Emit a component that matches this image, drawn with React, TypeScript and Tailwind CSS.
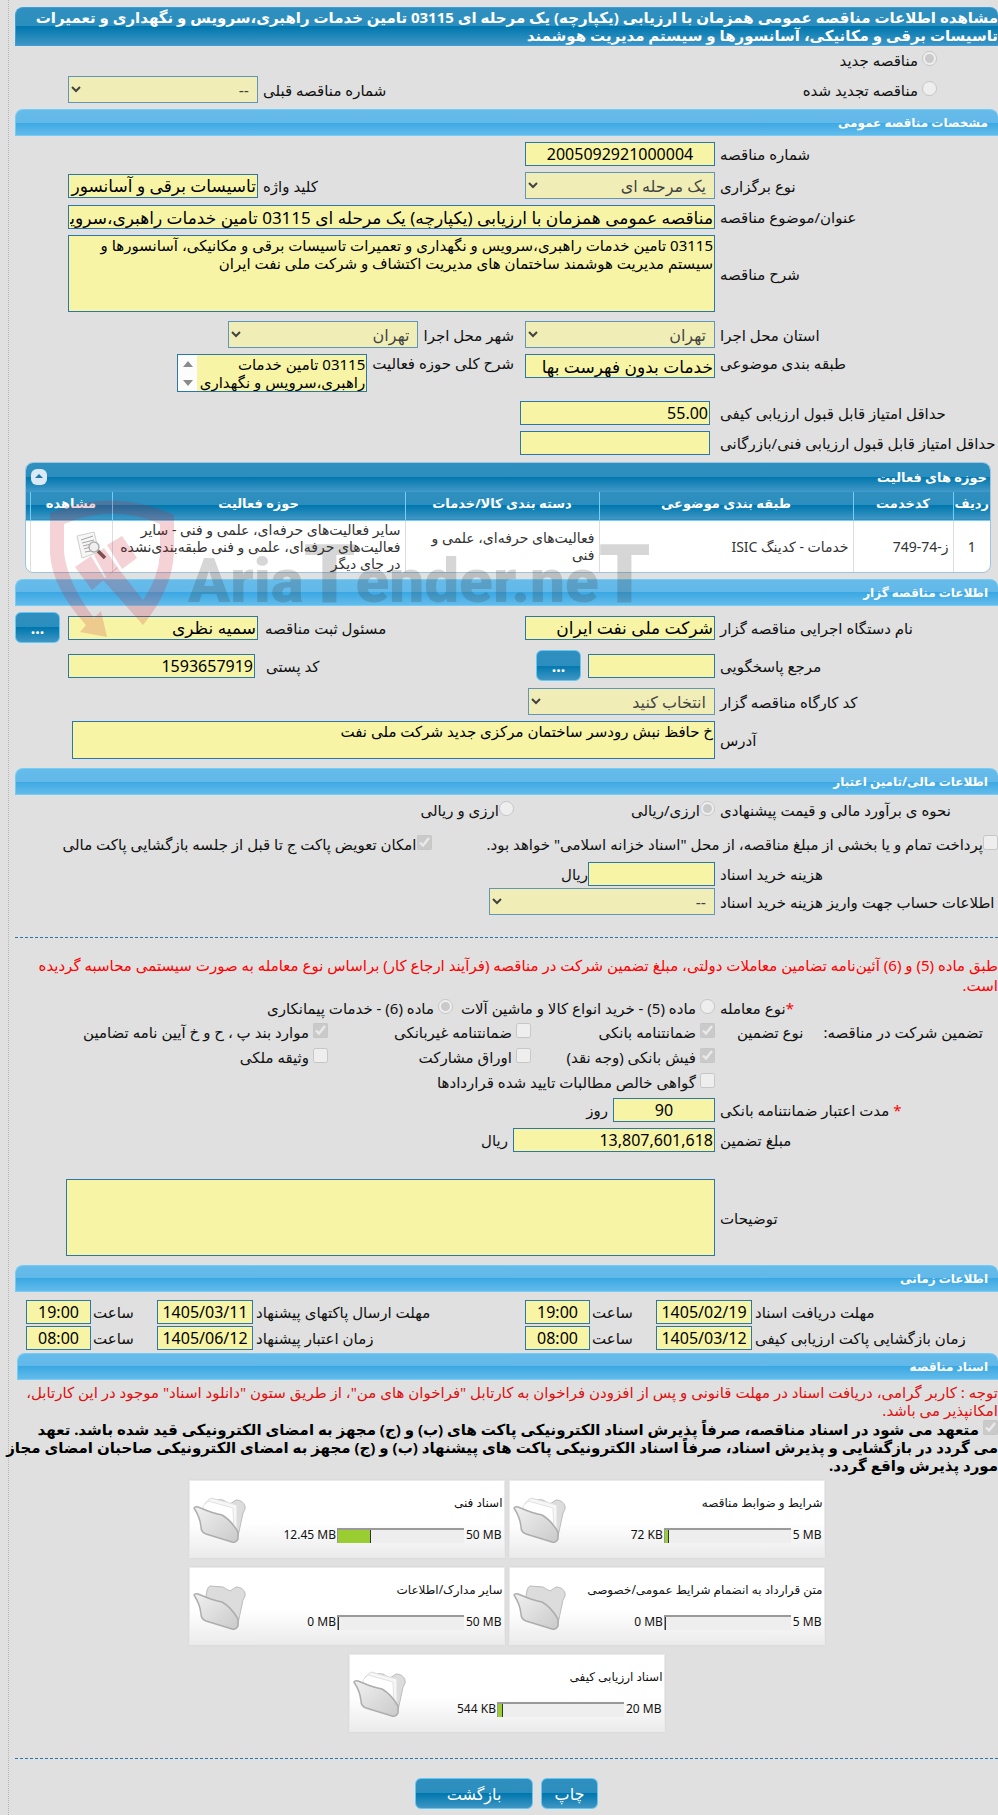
import { ReactNode } from 'react'
import clsx from 'clsx'

const darkBg = 'bg-[linear-gradient(#2f90bf_0%,#2c8ebe_50%,#0077ae_50%,#3f96c4_100%)]'
const lightBg = 'bg-[linear-gradient(#65bbea_0%,#62b9e9_50%,#3ba8e3_50%,#63bbea_100%)]'
const borderCls = 'border border-[#2a77a8]'
const fillCls = 'bg-[#f7f5a5] px-px text-black outline-none'

const SectionBar = ({ children, className }: { children: ReactNode; className?: string }) => (
  <h2
    className={clsx(
      'flex h-[27px] items-center rounded-t-lg border border-r-0 border-[#74cdf6] pr-[10px] text-[12px] font-bold text-white',
      lightBg,
      className
    )}
  >
    {children}
  </h2>
)

// 表单行: 右侧标签列 + 左侧字段区
const Row = ({
  label,
  htmlFor,
  children,
  className,
}: {
  label: ReactNode
  htmlFor?: string
  children: ReactNode
  className?: string
}) => (
  <div className={clsx('flex items-center', className)}>
    <label htmlFor={htmlFor} className="w-[278px] shrink-0 whitespace-nowrap text-left">
      {label}
    </label>
    <div className="flex flex-1 items-center pr-[5px]">{children}</div>
  </div>
)

const TextBox = ({
  id,
  value = '',
  large = false,
  className,
}: {
  id: string
  value?: string
  large?: boolean
  className?: string
}) => (
  <input
    id={id}
    type="text"
    readOnly
    value={value}
    className={clsx('h-6', large ? 'text-[17px]' : 'text-[16px]', borderCls, fillCls, className)}
  />
)

const Area = ({ id, value = '', className }: { id: string; value?: string; className?: string }) => (
  <textarea
    id={id}
    readOnly
    value={value}
    className={clsx('block resize-none text-[15px] leading-[18px]', borderCls, fillCls, className)}
  />
)

const Drop = ({ id, value, className }: { id: string; value: string; className?: string }) => (
  <select
    id={id}
    disabled
    className={clsx('h-[27px] bg-[#f7f5a5] px-1 text-[16px] text-black opacity-70', borderCls, className)}
  >
    <option>{value}</option>
  </select>
)

const Tick = ({
  type = 'checkbox',
  name,
  checked = false,
  tight = false,
  children,
  className,
}: {
  type?: 'checkbox' | 'radio'
  name?: string
  checked?: boolean
  tight?: boolean
  children: ReactNode
  className?: string
}) => (
  <label className={clsx('flex shrink-0 items-start whitespace-nowrap', !tight && 'gap-1', className)}>
    <input type={type} name={name} disabled defaultChecked={checked} className="size-[15px] shrink-0" />
    {children}
  </label>
)

const BlueButton = ({ children, className }: { children: ReactNode; className?: string }) => (
  <button
    type="button"
    className={clsx('h-[31px] rounded-md border border-[#63c8f4] text-[16px] text-white', darkBg, className)}
  >
    {children}
  </button>
)

const Folder = ({ filled }: { filled: boolean }) => (
  <svg viewBox="0 0 55 46" className="h-[46px] w-[55px] shrink-0" aria-hidden="true">
    <defs>
      <linearGradient id="folderFront" x1="0" y1="0" x2="1" y2="1">
        <stop offset="0" stopColor="#f1f1f1" />
        <stop offset="1" stopColor="#cacaca" />
      </linearGradient>
    </defs>
    <path
      d="M13 12 Q14 3 17 2 L30 3 Q33 5 37 7 L43 3 Q50 3 52 9 Q53 12 50 16 L44 44 L14 32 Z"
      fill="#dcdcdc"
      stroke="#bcbcbc"
    />
    {filled && <path d="M12 6 L18 1 L44 8 L44 36 L12 28 Z" fill="#f6f6f6" stroke="#dddddd" />}
    {filled && <path d="M10 9 L15 4 L40 11 L41 36 L12 28 Z" fill="#ffffff" stroke="#e2e2e2" />}
    <path
      d="M1 11 Q2 9 5 10 L15 14 Q20 16 29 18 Q38 23 45 35 L45 42 Q43 46 39 45 L13 37 Q8 35 8 30 Q7 20 1 11 Z"
      fill="url(#folderFront)"
      stroke="#adadad"
      strokeWidth="1.5"
    />
  </svg>
)

const docs = [
  { title: 'شرایط و ضوابط مناقصه', used: '72 KB', max: '5 MB', pct: 3 },
  { title: 'اسناد فنی', used: '12.45 MB', max: '50 MB', pct: 26 },
  { title: 'متن قرارداد به انضمام شرایط عمومی/خصوصی', used: '0 MB', max: '5 MB', pct: 0 },
  { title: 'سایر مدارک/اطلاعات', used: '0 MB', max: '50 MB', pct: 0 },
  { title: 'اسناد ارزیابی کیفی', used: '544 KB', max: '20 MB', pct: 4 },
]

const DocCard = ({ title, used, max, pct }: (typeof docs)[number]) => (
  <div
    dir="ltr"
    className="flex h-[78px] w-[316px] border border-[#eaeaea] bg-[linear-gradient(#ffffff_0%,#ffffff_55%,#ebebeb_100%)] pl-[3px] pr-px text-[12px] shadow-[0_0_2px_#d4d4d4]"
  >
    <div className="mt-4">
      <Folder filled={pct > 0} />
    </div>
    <div className="flex-1">
      <p dir="rtl" className="mt-3 h-5 whitespace-nowrap text-[12px] leading-5">
        {title}
      </p>
      <div className="mt-3 flex h-5 items-center justify-end gap-px">
        <span>{used}</span>
        <div className="flex h-[15px] w-[127px] border-l border-t-2 border-[#999999] bg-[#eeeeee]">
          <div
            className={clsx('border-r border-[#333333]', pct > 0 && 'bg-[#9acd32]')}
            style={{ width: `${pct}%` }}
          />
        </div>
        <span className="pl-px pr-px">{max}</span>
      </div>
    </div>
  </div>
)

const DocIcon = () => (
  <svg viewBox="0 0 32 30" className="h-[30px] w-8" aria-hidden="true">
    <path d="M1 5 L18 1 L23 21 L6 27 Z" fill="#f6f6f6" stroke="#cfcfcf" />
    <path d="M5 9 L17 5 M6 12 L18 9 M7 15 L15 13 M8 18 L14 16 M9 21 L15 20" stroke="#a5a5a5" />
    <circle cx="18" cy="16" r="5" fill="#efefef" stroke="#b0b0b0" strokeWidth="1.5" />
    <path d="M22 20 L29 27" stroke="#6c5a5a" strokeWidth="3.5" />
  </svg>
)

const Watermark = () => (
  <svg
    viewBox="45 495 610 150"
    className="pointer-events-none absolute left-[30px] top-[33px] h-[150px] w-[610px] overflow-visible"
    aria-hidden="true"
  >
    <g fill="#c8202c" fillOpacity="0.2">
      <path d="M50 513 Q113 487 174 515 V553 Q172 590 143 625 L103 580 L117 567 L143 600 Q159 577 160 553 V524 Q113 503 64 524 V553 Q68 584 94 618 L101 611 L107 637 L80 632 L86 625 Q52 588 50 553 Z" />
      <path d="M75 567 L91 556 L105 579 L92 590 Z" />
      <path d="M107 545 L122 536 L137 558 L122 569 Z" />
      <path d="M94 555 L104 548 L118 568 L106 577 Z" />
    </g>
    <text
      x="188"
      y="602"
      fontSize="62"
      fill="#333333"
      fillOpacity="0.2"
      fontFamily="Roboto"
      fontWeight="900"
      direction="ltr"
    >
      Aria<tspan fontSize="82">T</tspan>ender.ne<tspan fontSize="82">T</tspan>
    </text>
  </svg>
)

const th = 'border-l border-[#74cdf6] pb-1 font-bold'
const td = 'border-l border-[#dddddd] px-1'

const TimeField = ({ id, value }: { id: string; value: string }) => (
  <TextBox id={id} value={value} className="w-[65px] shrink-0 text-center" />
)

const DateField = ({ id, value }: { id: string; value: string }) => (
  <TextBox id={id} value={value} className="w-24 shrink-0 text-center" />
)

const timeRows = [
  {
    id: 'receive',
    cells: [
      { label: 'مهلت دریافت اسناد', date: '1405/02/19', time: '19:00' },
      { label: 'مهلت ارسال پاکتهای پیشنهاد', date: '1405/03/11', time: '19:00' },
    ],
  },
  {
    id: 'open',
    cells: [
      { label: 'زمان بازگشایی پاکت ارزیابی کیفی', date: '1405/03/12', time: '08:00' },
      { label: 'زمان اعتبار پیشنهاد', date: '1405/06/12', time: '08:00' },
    ],
  },
]

export default function App() {
  return (
    <div
      dir="rtl"
      className="overflow-hidden bg-[#e0e0e0] font-['Noto_Sans','DejaVu_Sans',sans-serif] text-[15px] leading-[18px] text-[#111111]"
    >
      <form className="ml-2 border-l border-dotted border-[#b5b5b5] pb-[6px] pl-[6px] pt-[7px]">
        <h1
          className={clsx(
            'h-[39px] whitespace-nowrap rounded-t-lg border border-r-0 border-[#3a9fdc] text-[15px] font-bold leading-[18px] text-white',
            darkBg
          )}
        >
          مشاهده اطلاعات مناقصه عمومی همزمان با ارزیابی (یکپارچه) یک مرحله ای 03115 تامین خدمات راهبری،سرویس و نگهداری و تعمیرات
          <br />
          تاسیسات برقی و مکانیکی، آسانسورها و سیستم مدیریت هوشمند
        </h1>

        <div className="flex h-7 items-center pr-[61px]">
          <Tick type="radio" name="kind" checked>
            مناقصه جدید
          </Tick>
        </div>
        <div className="mt-0.5 flex h-[27px] items-center justify-between pl-[53px] pr-[61px]">
          <Tick type="radio" name="kind">
            مناقصه تجدید شده
          </Tick>
          <div className="flex items-center gap-[5px]">
            <label htmlFor="prevNo">شماره مناقصه قبلی</label>
            <Drop id="prevNo" value="--" className="w-[190px]" />
          </div>
        </div>

        <SectionBar className="mt-1.5">مشخصات مناقصه عمومی</SectionBar>
        <Row label="شماره مناقصه" htmlFor="tenderNo" className="mt-1.5">
          <TextBox id="tenderNo" value="2005092921000004" className="w-[190px] text-center" />
        </Row>
        <Row label="نوع برگزاری" htmlFor="holdType" className="mt-1.5">
          <Drop id="holdType" value="یک مرحله ای" className="w-[190px]" />
          <div className="flex flex-1 items-center justify-end gap-[5px] pl-[53px]">
            <label htmlFor="keyword">کلید واژه</label>
            <TextBox id="keyword" value="تاسیسات برقی و آسانسور" large className="w-[190px]" />
          </div>
        </Row>
        <Row label="عنوان/موضوع مناقصه" htmlFor="subject" className="mt-1.5 pl-[53px]">
          <TextBox
            id="subject"
            value="مناقصه عمومی همزمان با ارزیابی (یکپارچه) یک مرحله ای 03115 تامین خدمات راهبری،سرویس و نگهداری و تعمیرات تاسیسات برقی"
            large
            className="w-full"
          />
        </Row>
        <Row label="شرح مناقصه" htmlFor="desc" className="mt-1.5 pl-[53px]">
          <Area
            id="desc"
            value="03115 تامین خدمات راهبری،سرویس و نگهداری و تعمیرات تاسیسات برقی و مکانیکی، آسانسورها و سیستم مدیریت هوشمند ساختمان های مدیریت اکتشاف و شرکت ملی نفت ایران"
            className="h-[77px] w-full"
          />
        </Row>
        <Row label="استان محل اجرا" htmlFor="province" className="mt-[9px]">
          <Drop id="province" value="تهران" className="w-[190px]" />
          <label htmlFor="city" className="pl-[5px] pr-[11px]">
            شهر محل اجرا
          </label>
          <Drop id="city" value="تهران" className="w-[190px]" />
        </Row>
        <div className="mt-1.5 flex h-[38px] items-start">
          <label htmlFor="category" className="w-[278px] shrink-0 text-left">
            طبقه بندی موضوعی
          </label>
          <div className="flex flex-1 items-start pr-[5px]">
            <TextBox id="category" value="خدمات بدون فهرست بها" large className="w-[190px]" />
            <label htmlFor="activity" className="pl-[5px] pr-[11px]">
              شرح کلی حوزه فعالیت
            </label>
            <div className={clsx('flex h-[38px] w-[190px] overflow-hidden', borderCls)}>
              <textarea
                id="activity"
                readOnly
                value="03115 تامین خدمات راهبری،سرویس و نگهداری و تعمیرات تاسیسات برقی"
                className={clsx('block min-w-0 flex-1 resize-none overflow-hidden leading-[18px]', fillCls)}
              />
              {/* 滚动条 */}
              <svg viewBox="0 0 19 36" className="h-9 w-[19px] shrink-0 bg-[#fcfcfc]" aria-hidden="true">
                <path d="M5 12 L10 6 L15 12 Z M5 25 L10 31 L15 25 Z" fill="#8b8b8b" />
              </svg>
            </div>
          </div>
        </div>
        <Row label="حداقل امتیاز قابل قبول ارزیابی کیفی" htmlFor="minQ" className="mt-[9px]">
          <TextBox id="minQ" value="55.00" className="mr-[5px] w-[190px]" />
        </Row>
        <Row label="حداقل امتیاز قابل قبول ارزیابی فنی/بازرگانی" htmlFor="minT" className="mt-1.5">
          <TextBox id="minT" className="mr-[5px] w-[190px]" />
        </Row>

        {/* حوزه های فعالیت */}
        <div className="relative mt-[7px] pl-[10px] pr-[7px]">
          <div className="h-[111px] overflow-hidden rounded-lg border border-[#9cc5e4] bg-white">
            <div
              className={clsx(
                'flex h-[29px] items-center justify-between border-b border-[#3d9bd0] pl-[5px] pr-[3px] text-[13px] font-bold text-white',
                darkBg
              )}
            >
              <span>حوزه های فعالیت</span>
              <button type="button" aria-label="بستن" className="size-4 rounded-md bg-[#dbe9f7]">
                <svg viewBox="0 0 16 16" className="size-4">
                  <path d="M4 9 L8 5 L12 9 Z" fill="#2079a8" />
                </svg>
              </button>
            </div>
            <table className="w-full table-fixed border-collapse text-[14px] leading-[17px]">
              <thead>
                <tr className={clsx('h-7 border-b border-[#74cdf6] text-[13px] text-white', darkBg)}>
                  <th className={clsx(th, 'w-[37px]')}>ردیف</th>
                  <th className={clsx(th, 'w-[100px]')}>کدخدمت</th>
                  <th className={th}>طبقه بندی موضوعی</th>
                  <th className={clsx(th, 'w-[194px]')}>دسته بندی کالا/خدمات</th>
                  <th className={clsx(th, 'w-[293px]')}>حوزه فعالیت</th>
                  <th className={clsx(th, 'w-[82px]')}>مشاهده</th>
                  <th className="w-1"></th>
                </tr>
              </thead>
              <tbody>
                <tr className="h-[52px] text-[#333333]">
                  <td className={clsx(td, 'text-center')}>1</td>
                  <td className={td}>ز-74-749</td>
                  <td className={td}>خدمات - کدینگ ISIC</td>
                  <td className={td}>
                    فعالیت‌های حرفه‌ای، علمی و<br />
                    فنی
                  </td>
                  <td className={clsx(td, 'whitespace-nowrap')}>
                    سایر فعالیت‌های حرفه‌ای، علمی و فنی - سایر
                    <br />
                    فعالیت‌های حرفه‌ای، علمی و فنی طبقه‌بندی‌نشده
                    <br />
                    در جای دیگر
                  </td>
                  <td className={td}>
                    <DocIcon />
                  </td>
                  <td></td>
                </tr>
              </tbody>
            </table>
          </div>
          <Watermark />
        </div>

        <SectionBar className="mt-1.5">اطلاعات مناقصه گزار</SectionBar>
        <Row label="نام دستگاه اجرایی مناقصه گزار" htmlFor="org" className="mt-1.5">
          <TextBox id="org" value="شرکت ملی نفت ایران" large className="w-[190px]" />
          <div className="flex flex-1 items-center justify-end">
            <label htmlFor="owner">مسئول ثبت مناقصه</label>
            <TextBox id="owner" value="سمیه نظری" large className="ml-2 mr-[7px] w-[190px]" />
            <BlueButton className="w-[45px] font-bold">...</BlueButton>
          </div>
        </Row>
        <Row label="مرجع پاسخگویی" htmlFor="ref" className="mt-[7px]">
          <TextBox id="ref" className="ml-[7px] w-[127px]" />
          <BlueButton className="w-[45px] font-bold">...</BlueButton>
          <div className="flex flex-1 items-center justify-end pl-[53px]">
            <label htmlFor="postal">کد پستی</label>
            <TextBox id="postal" value="1593657919" className="mr-[11px] w-[187px]" />
          </div>
        </Row>
        <Row label="کد کارگاه مناقصه گزار" htmlFor="workshop" className="mt-[7px]">
          <Drop id="workshop" value="انتخاب کنید" className="w-[187px]" />
        </Row>
        <Row label="آدرس" htmlFor="address" className="mt-1.5 pl-[57px]">
          <Area id="address" value="خ حافظ نبش رودسر ساختمان مرکزی جدید شرکت ملی نفت" className="h-[38px] w-full" />
        </Row>

        <SectionBar className="mt-[9px]">اطلاعات مالی/تامین اعتبار</SectionBar>
        <Row label="نحوه ی برآورد مالی و قیمت پیشنهادی" className="h-[30px]">
          <Tick type="radio" name="currency" checked tight className="ml-[117px]">
            ارزی/ریالی
          </Tick>
          <Tick type="radio" name="currency" tight>
            ارزی و ریالی
          </Tick>
        </Row>
        <div className="flex h-[37px] items-center gap-[55px]">
          <Tick tight>پرداخت تمام و یا بخشی از مبلغ مناقصه، از محل "اسناد خزانه اسلامی" خواهد بود.</Tick>
          <Tick checked tight>
            امکان تعویض پاکت ج تا قبل از جلسه بازگشایی پاکت مالی
          </Tick>
        </div>
        <Row label="هزینه خرید اسناد" htmlFor="fee">
          <TextBox id="fee" className="w-[127px]" />
          <span>ریال</span>
        </Row>
        <Row label="اطلاعات حساب جهت واریز هزینه خرید اسناد" htmlFor="account" className="mt-0.5">
          <Drop id="account" value="--" className="w-[226px]" />
        </Row>

        <div className="mt-[22px] border-t border-dashed border-[#2a77a8]" />
        <p className="mt-[17px] whitespace-nowrap leading-5 text-[#ff0000]">
          طبق ماده (5) و (6) آئین‌نامه تضامین معاملات دولتی، مبلغ تضمین شرکت در مناقصه (فرآیند ارجاع کار) براساس نوع معامله به صورت سیستمی محاسبه گردیده
          <br />
          است.
        </p>

        <Row
          label={
            <>
              <span className="text-[#ff0000]">*</span>نوع معامله
            </>
          }
          className="h-[25px]"
        >
          <Tick type="radio" name="deal" className="ml-2">
            ماده (5) - خرید انواع کالا و ماشین آلات
          </Tick>
          <Tick type="radio" name="deal" checked>
            ماده (6) - خدمات پیمانکاری
          </Tick>
        </Row>
        <div className="flex">
          <div className="flex w-[283px] shrink-0 gap-5 pr-[15px] pt-[3px]">
            <span className="whitespace-nowrap">تضمین شرکت در مناقصه:</span>
            <span>نوع تضمین</span>
          </div>
          <div className="flex flex-1 flex-col">
            <div className="flex h-6 items-center">
              <Tick checked className="w-[184px]">
                ضمانتنامه بانکی
              </Tick>
              <Tick className="w-[203px]">ضمانتنامه غیربانکی</Tick>
              <Tick checked>موارد بند پ ، ح و خ آیین نامه تضامین</Tick>
            </div>
            <div className="flex h-[25px] items-center">
              <Tick checked className="w-[184px]">
                فیش بانکی (وجه نقد)
              </Tick>
              <Tick className="w-[203px]">اوراق مشارکت</Tick>
              <Tick>وثیقه ملکی</Tick>
            </div>
            <div className="flex h-[26px] items-center">
              <Tick>گواهی خالص مطالبات تایید شده قراردادها</Tick>
            </div>
          </div>
        </div>
        <Row
          label={
            <>
              <span className="text-[#ff0000]">*</span> مدت اعتبار ضمانتنامه بانکی
            </>
          }
          htmlFor="validity"
          className="mt-[3px]"
        >
          <TextBox id="validity" value="90" className="ml-[5px] w-[102px] text-center" />
          <span>روز</span>
        </Row>
        <Row label="مبلغ تضمین" htmlFor="amount" className="mt-1.5">
          <TextBox id="amount" value="13,807,601,618" className="ml-[5px] w-[202px]" />
          <span>ریال</span>
        </Row>
        <Row label="توضیحات" htmlFor="notes" className="mt-[27px] pl-[51px]">
          <Area id="notes" className="h-[77px] w-full" />
        </Row>

        <SectionBar className="mt-[9px]">اطلاعات زمانی</SectionBar>
        <div className="mb-[3px] mt-2 flex flex-col gap-0.5">
          {timeRows.map(({ id, cells }) => (
            <div key={id} className="flex items-center whitespace-nowrap">
              {cells.map((c, i) => (
                <div key={c.label} className="flex items-center">
                  <label htmlFor={`${id}-date-${i}`} className={clsx('pl-[3px] text-left', i ? 'w-[272px]' : 'w-[246px]')}>
                    {c.label}
                  </label>
                  <DateField id={`${id}-date-${i}`} value={c.date} />
                  <label htmlFor={`${id}-time-${i}`} className="w-[66px] pl-0.5 text-left">
                    ساعت
                  </label>
                  <TimeField id={`${id}-time-${i}`} value={c.time} />
                </div>
              ))}
            </div>
          ))}
        </div>

        <SectionBar className="ml-0.5">اسناد مناقصه</SectionBar>
        <p className="mt-[3px] whitespace-nowrap text-[#dd1111]">
          توجه : کاربر گرامی، دریافت اسناد در مهلت قانونی و پس از افزودن فراخوان به کارتابل "فراخوان های من"، از طریق ستون "دانلود اسناد" موجود در این کارتابل،
          <br />
          امکانپذیر می باشد.
        </p>
        <label className="mt-px block whitespace-nowrap font-bold text-black">
          <input type="checkbox" disabled defaultChecked className="ml-1 size-[15px]" />
          متعهد می شود در اسناد مناقصه، صرفاً پذیرش اسناد الکترونیکی پاکت های (ب) و (ج) مجهز به امضای الکترونیکی قید شده باشد. تعهد
          <br />
          می گردد در بازگشایی و پذیرش اسناد، صرفاً اسناد الکترونیکی پاکت های پیشنهاد (ب) و (ج) مجهز به امضای الکترونیکی صاحبان امضای مجاز
          <br />
          مورد پذیرش واقع گردد.
        </label>

        <div className="mx-auto mt-1.5 flex max-w-[640px] flex-wrap justify-center gap-x-1 gap-y-[9px]">
          {docs.map((d) => (
            <DocCard key={d.title} {...d} />
          ))}
        </div>

        <div className="mt-[26px] border-t border-dashed border-[#2a77a8]" />
        <div className="mt-[19px] flex justify-center gap-2">
          <BlueButton className="w-[57px]">چاپ</BlueButton>
          <BlueButton className="w-[118px]">بازگشت</BlueButton>
        </div>
      </form>
    </div>
  )
}
